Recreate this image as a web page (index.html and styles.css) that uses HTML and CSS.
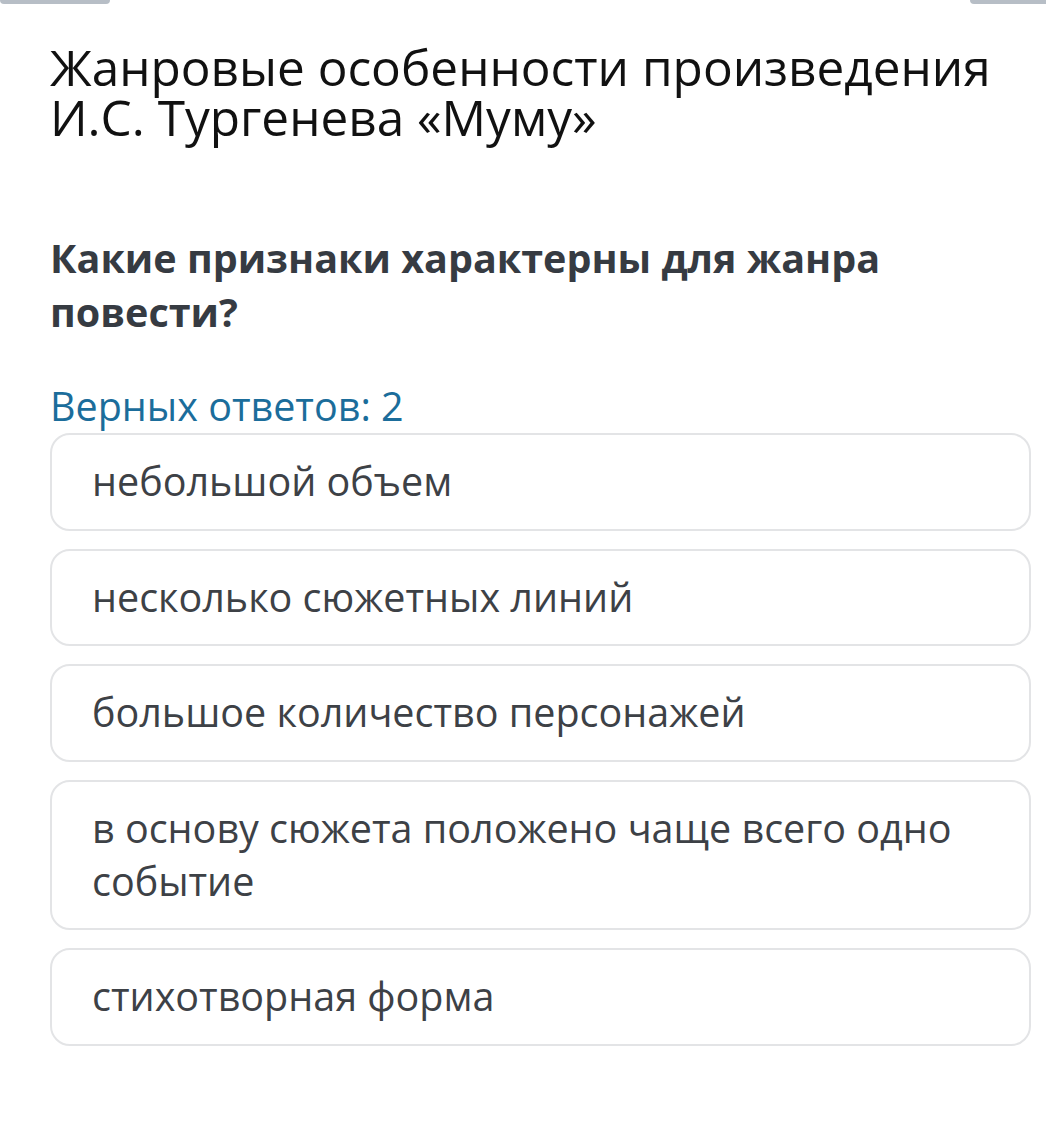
FILE: index.html
```html
<!DOCTYPE html>
<html lang="ru">
<head>
    <meta charset="UTF-8">
    <meta name="viewport" content="width=device-width, initial-scale=1.0">
    <title>Тест</title>
    <link rel="stylesheet" href="styles.css">
</head>
<body>
    <div class="top-bar">
        <span class="top-btn"></span>
        <span class="top-btn"></span>
    </div>

    <div class="quiz">
        <h1 class="quiz-title">Жанровые особенности произведения И.С. Тургенева «Муму»</h1>

        <h2 class="question">Какие признаки характерны для жанра повести?</h2>

        <div class="answers-count">Верных ответов: 2</div>

        <ul class="options">
            <li class="option">небольшой объем</li>
            <li class="option">несколько сюжетных линий</li>
            <li class="option">большое количество персонажей</li>
            <li class="option">в основу сюжета положено чаще всего одно событие</li>
            <li class="option">стихотворная форма</li>
        </ul>
    </div>
</body>
</html>
```

FILE: styles.css
```css
body {
    font-family: "Open Sans", "Noto Sans", sans-serif;
    margin: 0;
    background-color: #fff;
}

.top-bar {
    display: flex;
    justify-content: space-between;
    height: 4px;
}

.top-btn {
    width: 110px;
    height: 4px;
    background-color: #b7bec6;
    border-radius: 0 0 8px 8px;
}

.top-btn:last-child {
    width: 76px;
    border-radius: 0 0 0 8px;
}

.quiz {
    padding: 38px 15px 40px 50px;
}

.quiz-title {
    margin: 0 0 89px;
    font-size: 49.5px;
    font-weight: 400;
    line-height: 50px;
    color: #111;
}

.question {
    margin: 0 0 42px;
    font-size: 39.5px;
    font-weight: 700;
    line-height: 54px;
    color: #363b42;
}

.answers-count {
    margin-bottom: 1px;
    font-size: 39.5px;
    line-height: 51px;
    color: #1b6d9b;
}

.options {
    list-style: none;
    margin: 0;
    padding: 0;
    display: flex;
    flex-direction: column;
    gap: 18px;
}

.option {
    padding: 20px 40px 20.6px;
    border: 2px solid #e3e4e6;
    border-radius: 20px;
    font-size: 39.5px;
    line-height: 53px;
    color: #3d4146;
}
```
